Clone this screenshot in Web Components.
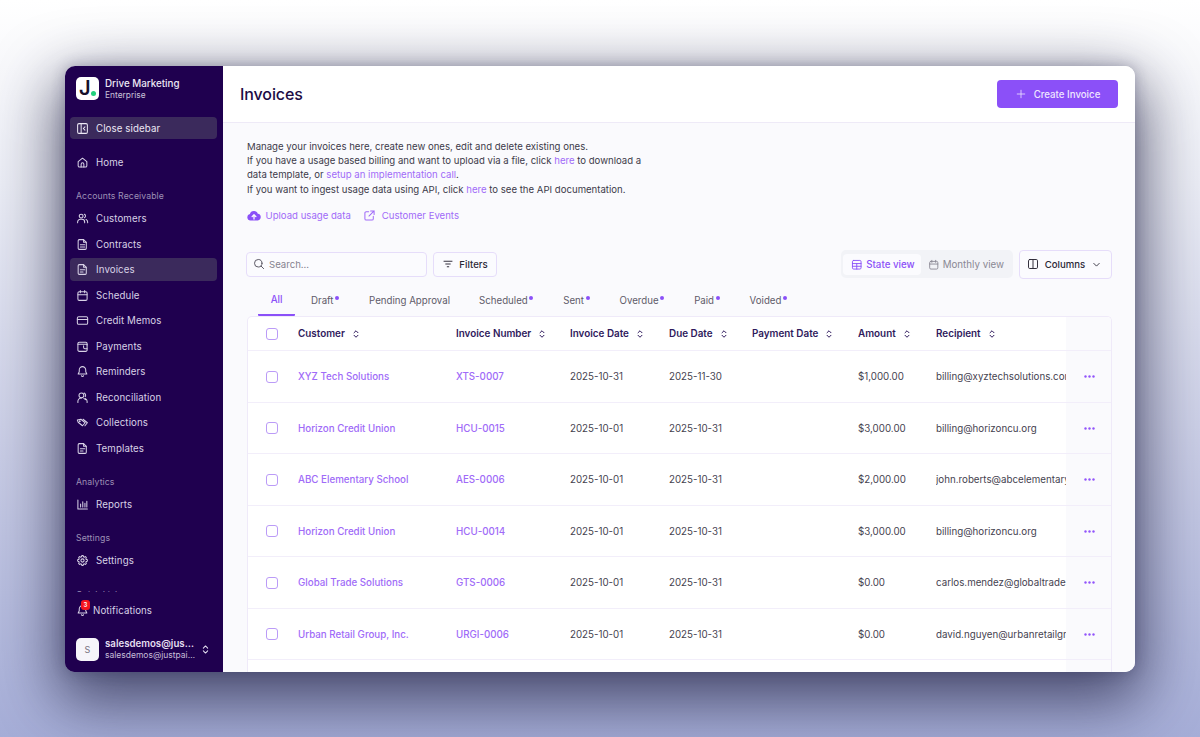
<!DOCTYPE html>
<html lang="en">
<head>
<meta charset="utf-8">
<title>Invoices</title>
<style>
  html, body { margin: 0; height: 737px; overflow: hidden; }
  body {
    background: linear-gradient(180deg, #ffffff 0%, #eceef6 25%, #c9cde6 62%, #a6aed8 100%);
    font-family: Inter, "Liberation Sans", sans-serif;
    padding-top: 66px;
    box-sizing: border-box;
  }
</style>
</head>
<body>
<app-window>
  <app-sidebar slot="side"></app-sidebar>
  <page-head slot="main" title="Invoices" action="Create Invoice"></page-head>
  <page-body slot="main">
    <intro-panel></intro-panel>
    <table-toolbar></table-toolbar>
    <status-tabs></status-tabs>
    <invoice-table></invoice-table>
  </page-body>
</app-window>

<script>
const ICONS = {
  home: '<path d="M4 10.5 12 4l8 6.5V18a2.5 2.5 0 0 1-2.5 2.5h-11A2.5 2.5 0 0 1 4 18z"/><path d="M9.5 20.5V15a2.5 2.5 0 0 1 5 0v5.5"/>',
  users: '<circle cx="9.5" cy="7.5" r="3.5"/><path d="M3 20v-1.5a5 5 0 0 1 5-5h3a5 5 0 0 1 5 5V20"/><path d="M15.5 4.3a3.5 3.5 0 0 1 0 6.4M18.5 13.8a5 5 0 0 1 3 4.7V20"/>',
  doc: '<path d="M6 3h8l5 5v11a2 2 0 0 1-2 2H6a2 2 0 0 1-2-2V5a2 2 0 0 1 2-2z"/><path d="M14 3v5h5M8 12.5h8M8 16.5h8"/>',
  invoice: '<path d="M6 3h8l5 5v11a2 2 0 0 1-2 2H6a2 2 0 0 1-2-2V5a2 2 0 0 1 2-2z"/><path d="M14 3v5h5M8 12.5h8M8 16.5h5"/>',
  calendar: '<rect x="3.5" y="5" width="17" height="16" rx="2.5"/><path d="M3.5 10.5h17M8 2.8V7M16 2.8V7"/>',
  card: '<rect x="2.5" y="5" width="19" height="14" rx="2.5"/><path d="M2.5 10h19"/>',
  wallet: '<path d="M20.5 9V6.5A2.5 2.5 0 0 0 18 4H6a2.5 2.5 0 0 0-2.5 2.5v12A2.5 2.5 0 0 0 6 21h12a2.5 2.5 0 0 0 2.5-2.5V16"/><path d="M3.5 8h17v8h-4a2.5 2.5 0 0 1-2.5-2.5v-3"/>',
  bell: '<path d="M12 3a6 6 0 0 0-6 6v3.5l-2 4h16l-2-4V9a6 6 0 0 0-6-6z"/><path d="M10 20a2.2 2.2 0 0 0 4 0"/>',
  recon: '<circle cx="10" cy="8" r="4.5"/><path d="M3.5 21v-2a6 6 0 0 1 6-6h1M15 3.8a4.5 4.5 0 0 1 2 6.7M14.5 13.5l3 2.5M20.5 21v-2a6 6 0 0 0-3-5"/>',
  tags: '<path d="M2.5 7.5 9 6l8 6.5-5 5.5-8-6.5z"/><path d="M13 6l8 6.5-4.5 5.5"/><circle cx="7" cy="9.5" r=".8"/>',
  chart: '<path d="M3.5 3.5v17H21M8.5 16.5V11M12.5 16.5V7M16.5 16.5V9.5M20 16.5V6"/>',
  gear: '<path d="M10.343 3.94c.09-.542.56-.94 1.11-.94h1.093c.55 0 1.02.398 1.11.94l.149.894c.07.424.384.764.78.93.398.164.855.142 1.205-.108l.737-.527a1.125 1.125 0 0 1 1.45.12l.773.774c.39.389.44 1.002.12 1.45l-.527.737c-.25.35-.272.806-.107 1.204.165.397.505.71.93.78l.893.15c.543.09.94.559.94 1.109v1.094c0 .55-.397 1.02-.94 1.11l-.894.149c-.424.07-.764.383-.929.78-.165.398-.143.854.107 1.204l.527.738c.32.447.269 1.06-.12 1.45l-.774.773a1.125 1.125 0 0 1-1.449.12l-.738-.527c-.35-.25-.806-.272-1.203-.107-.398.165-.71.505-.781.929l-.149.894c-.09.542-.56.94-1.11.94h-1.094c-.55 0-1.019-.398-1.11-.94l-.148-.894c-.071-.424-.384-.764-.781-.93-.398-.164-.854-.142-1.204.108l-.738.527c-.447.32-1.06.269-1.45-.12l-.773-.774a1.125 1.125 0 0 1-.12-1.45l.527-.737c.25-.35.272-.806.108-1.204-.165-.397-.506-.71-.93-.78l-.894-.15c-.542-.09-.94-.56-.94-1.109v-1.094c0-.55.398-1.02.94-1.11l.894-.149c.424-.07.765-.383.93-.78.165-.398.143-.854-.108-1.204l-.526-.738a1.125 1.125 0 0 1 .12-1.45l.773-.773a1.125 1.125 0 0 1 1.45-.12l.737.527c.35.25.807.272 1.204.107.397-.165.71-.505.78-.929l.15-.894z"/><circle cx="12" cy="12" r="3"/>',
  updown: '<path d="M8 9.5 12 5.5l4 4M8 14.5l4 4 4-4"/>',
  sidebar: '<rect x="3" y="3" width="18" height="18" rx="2.5"/><path d="M9.5 3v18M16.5 9l-3 3 3 3"/>',
  plus: '<path d="M12 4.5v15M4.5 12h15"/>',
  search: '<circle cx="10.5" cy="10.5" r="7.5"/><path d="m16.3 16.3 5 5"/>',
  filter: '<path d="M4 6.5h16M7.5 12h9M10.5 17.5h3"/>',
  grid: '<rect x="3" y="3" width="18" height="18" rx="2.5"/><path d="M3 9.5h18M3 15.2h18M12 9.5V21"/>',
  columns: '<rect x="3" y="3" width="18" height="18" rx="2.5"/><path d="M12 3v18"/>',
  chevron: '<path d="m6 9.5 6 6 6-6"/>',
  external: '<path d="M10.5 5H6a2.5 2.5 0 0 0-2.5 2.5V18A2.5 2.5 0 0 0 6 20.5h10.5A2.5 2.5 0 0 0 19 18v-4.5M14 3.5h6.500V10M20.500 3.500 11 13"/>'
};

function icon(name, size, width) {
  return `<svg width="${size}" height="${size}" viewBox="0 0 24 24" fill="none" stroke="currentColor" stroke-width="${width || 1.9}" stroke-linecap="round" stroke-linejoin="round" aria-hidden="true">${ICONS[name]}</svg>`;
}

class Base extends HTMLElement {
  render(html) {
    this.attachShadow({ mode: "open" }).innerHTML = html;
  }
}

customElements.define("app-window", class extends Base {
  constructor() {
    super();
    this.render(`
      <style>
        :host {
          display: flex;
          width: 1070px;
          height: 606px;
          margin: 0 auto;
          border-radius: 10px;
          overflow: hidden;
          background: #fff;
          box-shadow: 0 0 14px rgba(40, 40, 80, .3), 0 22px 62px 8px rgba(28, 28, 62, .7);
        }
        .side { flex: 0 0 158px; display: flex; min-height: 0; }
        .main { flex: 1; min-width: 0; display: flex; flex-direction: column; }
      </style>
      <div class="side"><slot name="side"></slot></div>
      <div class="main"><slot name="main"></slot></div>
    `);
  }
});

customElements.define("nav-item", class extends Base {
  constructor() {
    super();
    this.render(`
      <style>
        :host {
          display: flex;
          align-items: center;
          gap: 7px;
          height: 23px;
          margin: 0 6px 2.5px 5px;
          padding: 0 6px;
          border-radius: 4px;
          color: #d8d2e6;
          font-size: 9.7px;
          letter-spacing: .1px;
        }
        :host([active]) { background: #3b2a5c; }
        svg { flex: none; }
      </style>
      ${icon(this.getAttribute("icon"), 13)}
      <slot></slot>
    `);
  }
});

customElements.define("nav-label", class extends Base {
  constructor() {
    super();
    this.render(`
      <style>
        :host {
          display: block;
          margin: 17px 0 5px 11px;
          color: #9d91b5;
          font-size: 8.7px;
          line-height: 11px;
          letter-spacing: .1px;
        }
      </style>
      <slot></slot>
    `);
  }
});

customElements.define("user-chip", class extends Base {
  constructor() {
    super();
    this.render(`
      <style>
        :host { display: flex; align-items: center; gap: 6px; margin: 0 0 0 11px; color: #e4dff0; }
        .avatar {
          flex: none; width: 23px; height: 23px; border-radius: 5px;
          background: #f6f5fa; color: #77727f; font-size: 9px;
          display: flex; align-items: center; justify-content: center;
        }
        .text { width: 90px; min-width: 0; }
        .name, .mail { white-space: nowrap; overflow: hidden; text-overflow: ellipsis; }
        .name { font-size: 9.7px; font-weight: 600; line-height: 12px; }
        .mail { font-size: 8.5px; line-height: 11px; color: #c6bed8; }
        svg { flex: none; margin-left: -2px; }
      </style>
      <div class="avatar">S</div>
      <div class="text">
        <div class="name">salesdemos@justpaid.io</div>
        <div class="mail">salesdemos@justpaid.io</div>
      </div>
      ${icon("updown", 13)}
    `);
  }
});

customElements.define("app-sidebar", class extends Base {
  constructor() {
    super();
    this.render(`
      <style>
        :host {
          display: flex;
          flex-direction: column;
          width: 100%;
          background: #1f004f;
          color: #fff;
          font-family: Inter, "Liberation Sans", sans-serif;
        }
        .brand { display: flex; align-items: center; gap: 6px; padding: 11px 11px 0; height: 23px; flex: none; }
        .logo {
          position: relative; flex: none; width: 23px; height: 23px; border-radius: 5px; background: #fff;
          color: #16102a; font: 600 20px/23px Inter, "Liberation Sans", sans-serif; text-indent: 3px;
        }
        .logo i { position: absolute; right: 3.5px; bottom: 4.5px; width: 5px; height: 5px; border-radius: 50%; background: #22d07d; }
        .org { margin-top: 1px; }
        .org b { display: block; font-size: 9.8px; font-weight: 500; line-height: 12px; color: #ece8f4; }
        .org span { display: block; font-size: 8.4px; line-height: 11px; color: #c9c2da; }
        .close {
          display: flex; align-items: center; gap: 7px; flex: none;
          height: 22px; margin: 17px 6px 0 5px; padding: 0 6px;
          border-radius: 4px; background: #3b2a5c; color: #ece8f4; font-size: 9.7px; letter-spacing: .1px;
        }
        nav { flex: 1; min-height: 0; overflow: hidden; padding-top: 12px; }
        .foot { flex: none; height: 80px; background: #1f004f; }
        .note {
          position: relative; display: flex; align-items: center; gap: 4px;
          height: 22px; padding-left: 11px; margin-top: 7px; color: #d8d2e6; font-size: 9.7px; letter-spacing: .1px;
        }
        .note b {
          position: absolute; left: 16px; top: 1px; width: 9px; height: 10px; border-radius: 3px;
          background: #f5141e; color: #fff; font: 600 6px/10px Inter, "Liberation Sans", sans-serif; text-align: center;
        }
        user-chip { margin-top: 17px; }
      </style>
      <div class="brand">
        <div class="logo">J<i></i></div>
        <div class="org"><b>Drive Marketing</b><span>Enterprise</span></div>
      </div>
      <div class="close">${icon("sidebar", 13)}Close sidebar</div>
      <nav>
        <nav-item icon="home">Home</nav-item>
        <nav-label style="margin-top:17px">Accounts Receivable</nav-label>
        <nav-item icon="users">Customers</nav-item>
        <nav-item icon="doc">Contracts</nav-item>
        <nav-item icon="invoice" active>Invoices</nav-item>
        <nav-item icon="calendar">Schedule</nav-item>
        <nav-item icon="card">Credit Memos</nav-item>
        <nav-item icon="wallet">Payments</nav-item>
        <nav-item icon="bell">Reminders</nav-item>
        <nav-item icon="recon">Reconciliation</nav-item>
        <nav-item icon="tags">Collections</nav-item>
        <nav-item icon="invoice">Templates</nav-item>
        <nav-label>Analytics</nav-label>
        <nav-item icon="chart">Reports</nav-item>
        <nav-label>Settings</nav-label>
        <nav-item icon="gear">Settings</nav-item>
        <nav-label style="margin-top:18.500px">Quick Links</nav-label>
      </nav>
      <div class="foot">
        <div class="note">${icon("bell", 13)}<span>Notifications</span><b>3</b></div>
        <user-chip></user-chip>
      </div>
    `);
  }
});

customElements.define("page-head", class extends Base {
  constructor() {
    super();
    this.render(`
      <style>
        :host {
          display: flex; align-items: center; justify-content: space-between; flex: none;
          box-sizing: border-box; height: 57px; padding: 0 17px;
          background: #fff; border-bottom: 1px solid #eeeaf7;
        }
        h1 { margin: 0; font-size: 16px; font-weight: 500; color: #1d0b45; letter-spacing: -.1px; }
        button {
          display: flex; align-items: center; justify-content: center; gap: 7px;
          width: 121px; height: 28px; border: 0; border-radius: 4px;
          background: #8b50f8; color: #efe6ff; font: 500 9.7px Inter, "Liberation Sans", sans-serif;
        }
      </style>
      <h1>${this.getAttribute("title")}</h1>
      <button>${icon("plus", 12, 1.6)}${this.getAttribute("action")}</button>
    `);
  }
});

customElements.define("page-body", class extends Base {
  constructor() {
    super();
    this.render(`
      <style>
        :host {
          display: block; flex: 1; min-height: 0; overflow: hidden;
          padding: 17px 23px 0 24px; background: #fafafd;
        }
      </style>
      <slot></slot>
    `);
  }
});

customElements.define("intro-panel", class extends Base {
  constructor() {
    super();
    this.render(`
      <style>
        :host { display: block; color: #3d3a4a; font-size: 9.6px; line-height: 14.2px; }
        p { margin: 0; }
        a { color: #a06bf8; text-decoration: none; }
        .links { display: flex; align-items: center; gap: 12px; height: 14px; margin-top: 12px; color: #a06bf8; }
        .links span { display: flex; align-items: center; gap: 6px; }
        .links span:first-child { gap: 5px; margin-left: -.5px; }
        .cloud { width: 14px; height: 11px; color: #8b50f8; }
      </style>
      <p>Manage your invoices here, create new ones, edit and delete existing ones.</p>
      <p>If you have a usage based billing and want to upload via a file, click <a>here</a> to download a</p>
      <p>data template, or <a>setup an implementation call</a>.</p>
      <p>If you want to ingest usage data using API, click <a>here</a> to see the API documentation.</p>
      <div class="links">
        <span><svg class="cloud" viewBox="0 0 24 18" aria-hidden="true"><path fill="currentColor" d="M6 17.5A5.5 5.5 0 0 1 5 6.6 7 7 0 0 1 18.5 6a5.8 5.8 0 0 1 0 11.500z"/><path fill="none" stroke="#fafafd" stroke-width="2.2" stroke-linecap="round" stroke-linejoin="round" d="M12 15V8M8.8 11 12 7.8 15.2 11"/></svg>Upload usage data</span>
        <span>${icon("external", 13)}Customer Events</span>
      </div>
    `);
  }
});

customElements.define("table-toolbar", class extends Base {
  constructor() {
    super();
    this.render(`
      <style>
        :host { display: flex; align-items: center; gap: 6px; height: 29px; margin: 27px 0 0 -1px; font-size: 9.6px; }
        .box {
          display: flex; align-items: center; box-sizing: border-box; height: 25px;
          border: 1px solid #e6ddfa; border-radius: 4px; background: #fbfbfe;
        }
        .search { width: 181px; gap: 4px; padding: 0 6px; color: #86838f; }
        .search svg { color: #55525f; }
        .filters { width: 64px; gap: 5px; justify-content: center; color: #2a2735; font-weight: 500; }
        .toggle {
          display: flex; align-items: center; height: 28px; box-sizing: border-box; margin-left: auto;
          padding: 0 2px; border-radius: 5px; background: #f2f3f7; color: #8a8894; font-size: 9.75px;
        }
        .toggle span { display: flex; align-items: center; gap: 3.5px; height: 21px; padding: 0 7px; border-radius: 4px; }
        .toggle .on { padding: 0 6px 0 8px; background: #fbfbfe; color: #8b50f8; font-weight: 500; }
        .columns { width: 93px; height: 29px; gap: 6px; padding-right: 2px; justify-content: center; color: #2a2735; font-weight: 500; }
      </style>
      <div class="box search">${icon("search", 12)}<span>Search...</span></div>
      <div class="box filters">${icon("filter", 12)}Filters</div>
      <div class="toggle">
        <span class="on">${icon("grid", 11.5)}State view</span>
        <span>${icon("calendar", 11.5)}Monthly view</span>
      </div>
      <div class="box columns">${icon("columns", 12)}Columns${icon("chevron", 11)}</div>
    `);
  }
});

customElements.define("status-tabs", class extends Base {
  constructor() {
    super();
    const tabs = [["All"], ["Draft", 1], ["Pending Approval"], ["Scheduled", 1], ["Sent", 1], ["Overdue", 1], ["Paid", 1], ["Voided", 1]];
    this.render(`
      <style>
        :host { display: flex; gap: 3px; height: 37px; padding-left: 11px; box-sizing: border-box; font-size: 9.7px; color: #5e5b69; }
        div { display: flex; align-items: center; height: 37px; padding: 7px 13px 0; box-sizing: border-box; }
        .on { width: 37px; padding: 7px 0 0; justify-content: center; color: #8b50f8; font-weight: 500; border-bottom: 2px solid #8b50f8; border-radius: 0 0 1px 1px; }
        i { align-self: flex-start; width: 4px; height: 4px; margin: 10px 1px 0 1.5px; border-radius: 50%; background: #8b50f8; }
      </style>
      ${tabs.map(([t, d], n) => `<div class="${n ? "" : "on"}">${t}${d ? "<i></i>" : ""}</div>`).join("")}
    `);
  }
});

customElements.define("invoice-table", class extends Base {
  constructor() {
    super();
    const rows = [
      ["XYZ Tech Solutions", "XTS-0007", "2025-10-31", "2025-11-30", "$1,000.00", "billing@xyztechsolutions.com"],
      ["Horizon Credit Union", "HCU-0015", "2025-10-01", "2025-10-31", "$3,000.00", "billing@horizoncu.org"],
      ["ABC Elementary School", "AES-0006", "2025-10-01", "2025-10-31", "$2,000.00", "john.roberts@abcelementary.edu"],
      ["Horizon Credit Union", "HCU-0014", "2025-10-01", "2025-10-31", "$3,000.00", "billing@horizoncu.org"],
      ["Global Trade Solutions", "GTS-0006", "2025-10-01", "2025-10-31", "$0.00", "carlos.mendez@globaltradesolutions.com"],
      ["Urban Retail Group, Inc.", "URGI-0006", "2025-10-01", "2025-10-31", "$0.00", "david.nguyen@urbanretailgroup.com"]
    ];
    const heads = ["Customer", "Invoice Number", "Invoice Date", "Due Date", "Payment Date", "Amount", "Recipient"];
    const widths = [51, 158, 114, 99, 83, 106, 78, 130, 46];
    const box = '<span class="check"></span>';
    const dots = '<svg class="dots" width="11" height="3" viewBox="0 0 11 3" aria-hidden="true"><circle cx="1.5" cy="1.5" r="1.2"/><circle cx="5.5" cy="1.5" r="1.2"/><circle cx="9.5" cy="1.5" r="1.2"/></svg>';
    this.render(`
      <style>
        :host {
          display: block; background: #fff; border: 1px solid #efeaf9; border-bottom: 0;
          border-radius: 5px 5px 0 0; overflow: hidden; height: 400px;
          font-size: 9.75px; color: #45424f;
        }
        table { width: 865px; margin-left: -1px; table-layout: fixed; border-collapse: collapse; }
        th, td { padding: 0; white-space: nowrap; overflow: hidden; text-align: left; font-weight: 400; border-bottom: 1.5px solid #f2eefa; }
        th { height: 33px; font-size: 9.9px; font-weight: 600; color: #2f1a5c; }
        td { height: 50px; }
        tr { height: 51.5px; }
        tr:first-child { height: 34px; }
        th svg { vertical-align: -2.5px; margin-left: 5px; color: #2f1a5c; }
        .c { text-align: center; padding-right: 1px; }
        .check { display: inline-block; box-sizing: border-box; width: 12px; height: 12px; border: 1.2px solid #bb9bf7; border-radius: 3px; vertical-align: middle; background: #fff; }
        .link { color: #a06bf8; font-weight: 500; }
        .act { background: #fafafd; text-align: center; }
        .dots { display: block; margin: 0 auto; fill: #9255fb; }
      </style>
      <table>
        <colgroup>${widths.map(w => `<col style="width:${w}px">`).join("")}</colgroup>
        <tr>
          <th class="c">${box}</th>
          ${heads.map(h => `<th>${h}${icon("updown", 12, 2)}</th>`).join("")}
          <th class="act"></th>
        </tr>
        ${rows.map(r => `<tr>
          <td class="c">${box}</td>
          <td class="link">${r[0]}</td>
          <td class="link">${r[1]}</td>
          <td>${r[2]}</td>
          <td>${r[3]}</td>
          <td></td>
          <td>${r[4]}</td>
          <td>${r[5]}</td>
          <td class="act">${dots}</td>
        </tr>`).join("")}
        <tr><td colspan="8"></td><td class="act"></td></tr>
      </table>
    `);
  }
});
</script>
</body>
</html>
